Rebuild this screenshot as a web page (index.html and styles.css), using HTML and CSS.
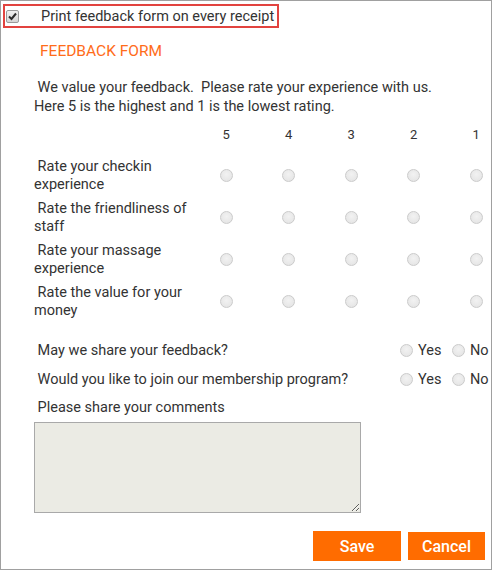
FILE: index.html
```html
<!DOCTYPE html>
<html lang="en">
<head>
  <meta charset="UTF-8">
  <title>Feedback Form</title>
  <link rel="stylesheet" href="styles.css">
</head>
<body>
  <div class="frame">
    <label class="print-row">
      <span class="check-box">
        <svg width="11" height="11" viewBox="0 0 11 11"><path d="M2 5.5 L4.5 8 L9 2.5" fill="none" stroke="#2b2b2b" stroke-width="2"/></svg>
      </span>
      <span class="print-text">Print feedback form on every receipt</span>
    </label>

    <h3 class="form-title">FEEDBACK FORM</h3>

    <p class="intro">&nbsp;We value your feedback.&nbsp; Please rate your experience with us.<br>Here 5 is the highest and 1 is the lowest rating.</p>

    <div class="rating-grid">
      <div></div>
      <div class="num">5</div>
      <div class="num">4</div>
      <div class="num">3</div>
      <div class="num">2</div>
      <div class="num">1</div>

      <div class="rate-label">&nbsp;Rate your checkin experience</div>
      <div class="cell"><input type="radio" name="r1"></div>
      <div class="cell"><input type="radio" name="r1"></div>
      <div class="cell"><input type="radio" name="r1"></div>
      <div class="cell"><input type="radio" name="r1"></div>
      <div class="cell"><input type="radio" name="r1"></div>

      <div class="rate-label">&nbsp;Rate the friendliness of staff</div>
      <div class="cell"><input type="radio" name="r2"></div>
      <div class="cell"><input type="radio" name="r2"></div>
      <div class="cell"><input type="radio" name="r2"></div>
      <div class="cell"><input type="radio" name="r2"></div>
      <div class="cell"><input type="radio" name="r2"></div>

      <div class="rate-label">&nbsp;Rate your massage experience</div>
      <div class="cell"><input type="radio" name="r3"></div>
      <div class="cell"><input type="radio" name="r3"></div>
      <div class="cell"><input type="radio" name="r3"></div>
      <div class="cell"><input type="radio" name="r3"></div>
      <div class="cell"><input type="radio" name="r3"></div>

      <div class="rate-label">&nbsp;Rate the value for your money</div>
      <div class="cell"><input type="radio" name="r4"></div>
      <div class="cell"><input type="radio" name="r4"></div>
      <div class="cell"><input type="radio" name="r4"></div>
      <div class="cell"><input type="radio" name="r4"></div>
      <div class="cell"><input type="radio" name="r4"></div>
    </div>

    <div class="questions">
      <div class="question">
        <span class="q-text">&nbsp;May we share your feedback?</span>
        <label class="opt"><input type="radio" name="share"> Yes</label>
        <label class="opt"><input type="radio" name="share"> No</label>
      </div>
      <div class="question">
        <span class="q-text">&nbsp;Would you like to join our membership program?</span>
        <label class="opt"><input type="radio" name="member"> Yes</label>
        <label class="opt"><input type="radio" name="member"> No</label>
      </div>
    </div>

    <div class="comments-label">&nbsp;Please share your comments</div>
    <textarea class="comments"></textarea>

    <div class="actions">
      <button class="btn btn-save">Save</button>
      <button class="btn btn-cancel">Cancel</button>
    </div>
  </div>
</body>
</html>
```

FILE: styles.css
```css
body {
  margin: 0;
  font-family: Roboto, "Liberation Sans", Arial, sans-serif;
  color: #333;
  background: #fff;
}
.frame {
  width: 492px;
  height: 570px;
  box-sizing: border-box;
  border: 1px solid #a0a0a0;
  overflow: hidden;
}
.print-row {
  display: flex;
  align-items: center;
  width: 276px;
  height: 24px;
  box-sizing: border-box;
  margin: 3px 0 0 2px;
  border: 2px solid #e2433f;
  font-size: 14.5px;
  white-space: nowrap;
}
.check-box {
  width: 11px;
  height: 11px;
  margin-left: 1px;
  border: 1px solid #9a9a9a;
  border-radius: 2px;
  background: linear-gradient(#f0f0f0, #d6d6d6);
  display: flex;
}
.print-text {
  margin-left: 22px;
  color: #333;
}
.form-title {
  margin: 14px 0 0 39px;
  font-size: 15.5px;
  font-weight: normal;
  color: #ff6c1a;
  line-height: 19px;
}
.intro {
  margin: 17px 0 0 33px;
  font-size: 14.5px;
  line-height: 19px;
  white-space: nowrap;
}
.rating-grid {
  display: grid;
  grid-template-columns: 161px repeat(5, 62.5px);
  grid-auto-rows: 42px;
  grid-template-rows: 38px;
  margin-left: 33px;
}
.num {
  display: flex;
  align-items: center;
  justify-content: center;
  padding-bottom: 2px;
  font-size: 13px;
}
.rate-label {
  display: flex;
  align-items: center;
  padding-top: 2px;
  font-size: 14.5px;
  line-height: 18px;
}
.cell {
  display: flex;
  align-items: center;
  justify-content: center;
  padding-top: 1px;
}
input[type="radio"] {
  appearance: none;
  width: 13px;
  height: 13px;
  margin: 0;
  border: 1px solid #cbcbcb;
  border-radius: 50%;
  background: radial-gradient(circle at 50% 40%, #f2f2f2, #e2e2e2);
}
.questions {
  margin-top: 14px;
}
.question {
  display: grid;
  grid-template-columns: 366px 52px auto;
  align-items: center;
  height: 29px;
  margin-left: 33px;
  font-size: 14.5px;
}
.opt {
  display: flex;
  align-items: center;
  gap: 5px;
  white-space: nowrap;
}
.comments-label {
  margin: 4px 0 0 33px;
  font-size: 14.5px;
  line-height: 19px;
}
.comments {
  display: block;
  width: 327px;
  height: 91px;
  box-sizing: border-box;
  margin: 5px 0 0 33px;
  border: 1px solid #a9a9a9;
  background: #ebebe4;
  resize: both;
}
.actions {
  display: flex;
  justify-content: flex-end;
  align-items: center;
  gap: 7px;
  margin: 18px 6px 0 0;
}
.btn {
  border: none;
  background: #ff6c00;
  color: #fff;
  font-family: Roboto, "Liberation Sans", Arial, sans-serif;
  font-size: 16px;
  font-weight: 500;
  cursor: pointer;
}
.btn-save {
  width: 88px;
  height: 30px;
}
.btn-cancel {
  width: 77px;
  height: 28px;
}
```
